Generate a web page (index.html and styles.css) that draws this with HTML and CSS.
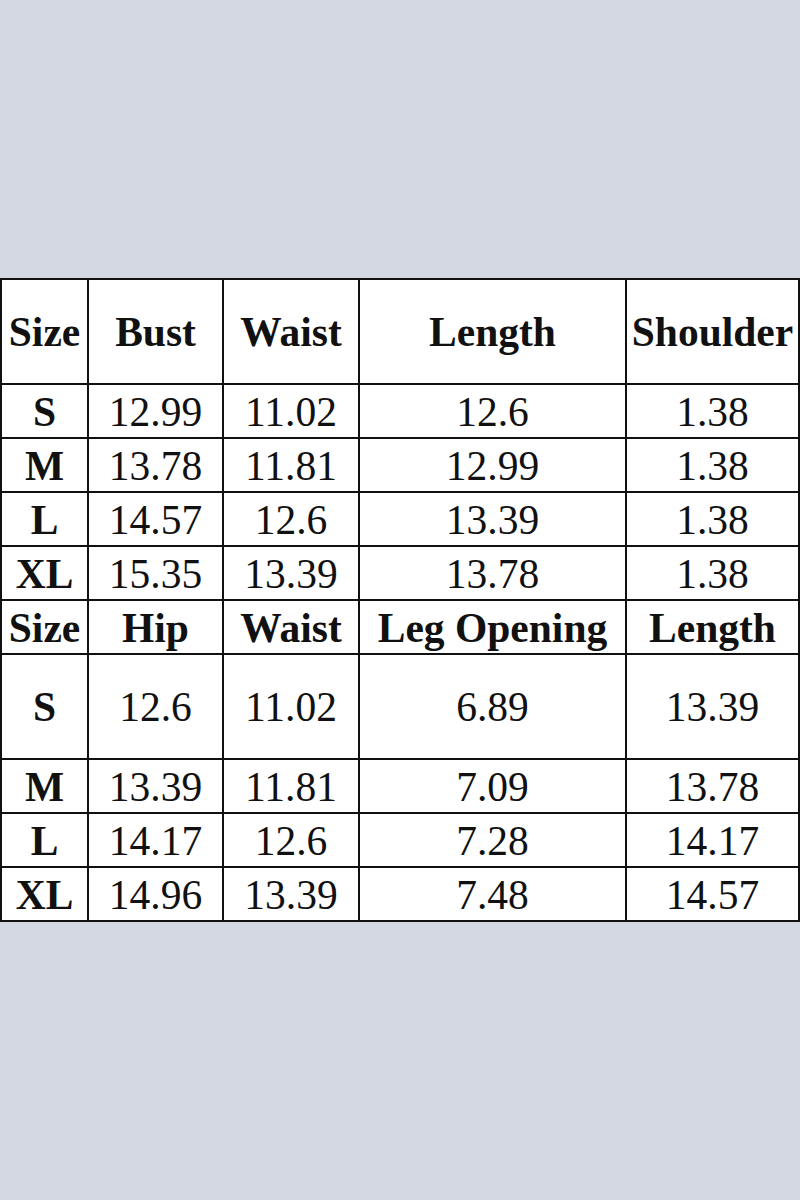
FILE: index.html
```html
<!DOCTYPE html>
<html lang="en">
<head>
<meta charset="utf-8">
<title>Size Chart</title>
<link rel="stylesheet" href="styles.css">
</head>
<body>
<div class="page">
<table class="chart">
  <colgroup>
    <col class="c1"><col class="c2"><col class="c3"><col class="c4"><col class="c5">
  </colgroup>
  <tbody>
    <tr class="tall head"><td>Size</td><td>Bust</td><td>Waist</td><td>Length</td><td>Shoulder</td></tr>
    <tr><th>S</th><td>12.99</td><td>11.02</td><td>12.6</td><td>1.38</td></tr>
    <tr><th>M</th><td>13.78</td><td>11.81</td><td>12.99</td><td>1.38</td></tr>
    <tr><th>L</th><td>14.57</td><td>12.6</td><td>13.39</td><td>1.38</td></tr>
    <tr><th>XL</th><td>15.35</td><td>13.39</td><td>13.78</td><td>1.38</td></tr>
    <tr class="head"><td>Size</td><td>Hip</td><td>Waist</td><td>Leg Opening</td><td>Length</td></tr>
    <tr class="tall"><th>S</th><td>12.6</td><td>11.02</td><td>6.89</td><td>13.39</td></tr>
    <tr><th>M</th><td>13.39</td><td>11.81</td><td>7.09</td><td>13.78</td></tr>
    <tr><th>L</th><td>14.17</td><td>12.6</td><td>7.28</td><td>14.17</td></tr>
    <tr><th>XL</th><td>14.96</td><td>13.39</td><td>7.48</td><td>14.57</td></tr>
  </tbody>
</table>
</div>
</body>
</html>
```
FILE: styles.css
```css
html, body {
  margin: 0;
  padding: 0;
  background: #d3d8e3;
}
.page {
  width: 800px;
  height: 1200px;
  padding-top: 278px;
  box-sizing: border-box;
}
.chart {
  border-collapse: collapse;
  table-layout: fixed;
  width: 798px;
  background: #fff;
  font-family: "Liberation Serif", "Times New Roman", serif;
  font-size: 41.5px;
  color: #111;
}
.c1 { width: 87px; }
.c2 { width: 135px; }
.c3 { width: 136px; }
.c4 { width: 267px; }
.c5 { width: 173px; }
.chart td, .chart th {
  border: 2px solid #111;
  padding: 3px 0 0;
  text-align: center;
  vertical-align: middle;
  white-space: nowrap;
  overflow: hidden;
  height: 49px;
  line-height: 1;
}
.chart th, .head td {
  font-weight: bold;
}
.tall td, .tall th {
  height: 100px;
}
```
